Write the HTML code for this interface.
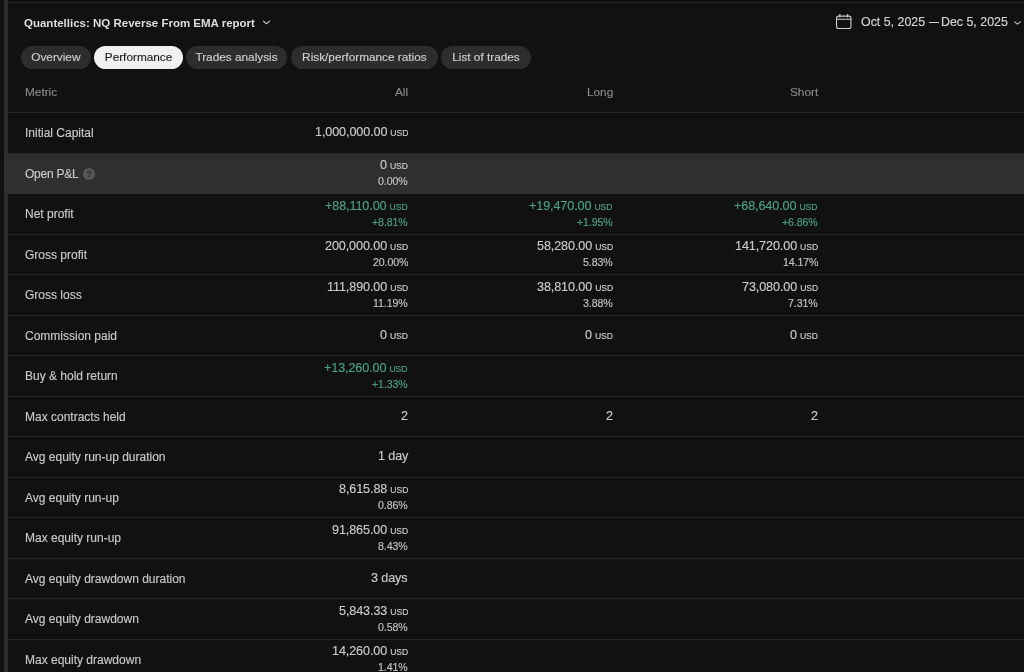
<!DOCTYPE html><html><head><meta charset="utf-8"><style>
*{margin:0;padding:0;box-sizing:border-box}
html,body{width:1024px;height:672px;overflow:hidden;background:#111111;font-family:"Liberation Sans",sans-serif;color:#d8d8d8}
.abs{position:absolute}
body>div{will-change:transform}
.lbl,.v1,.v2,.pill,.date,.hdr{-webkit-text-stroke:0.15px currentColor}
.lstrip{position:absolute;left:4px;top:0;width:4px;height:672px;background:#2c2c2c}
.topline{position:absolute;left:8px;top:2px;width:1016px;height:1px;background:#252525}
.title{position:absolute;left:24px;top:15px;font-size:11.5px;font-weight:bold;color:#dedede;white-space:nowrap;line-height:16px}
.chev{position:absolute}
.date{position:absolute;top:14.2px;font-size:12.4px;color:#d4d4d4;white-space:nowrap;line-height:16px}
.pill{position:absolute;top:46px;height:23px;border-radius:11.5px;background:#2d2d2d;color:#cfcfcf;font-size:11.8px;line-height:23.4px;text-align:center;white-space:nowrap}
.pill.act{background:#f0f0f0;color:#1c1c1c}
.hdr{position:absolute;top:85px;font-size:11.8px;color:#8a8a8a;line-height:14px;white-space:nowrap}
.row{position:absolute;left:8px;width:1016px}
.row.hov{left:4px;width:1020px;background:#2f2f2f}
.bline{position:absolute;left:8px;width:1016px;height:1px;background:#262626}
.lbl{position:absolute;left:25px;font-size:12px;color:#c9c9c9;white-space:nowrap;line-height:14px}
.v1{position:absolute;font-size:12.6px;color:#cacaca;white-space:nowrap;line-height:14px;text-align:right;letter-spacing:-0.1px}
.v1 .u{font-size:8.6px;letter-spacing:0px;margin-left:3px}
.v2{position:absolute;font-size:10.6px;color:#c2c2c2;white-space:nowrap;line-height:12px;text-align:right;letter-spacing:-0.1px}
.g{color:#4ca083}
.q{position:absolute;left:83px;width:12px;height:12px;border-radius:6px;background:#565656;color:#2e2e2e;font-size:9px;font-weight:bold;line-height:12px;text-align:center}
</style></head><body>
<div class="lstrip"></div><div class="topline"></div>
<div class="title">Quantellics: NQ Reverse From EMA report</div>
<svg class="chev" style="left:262px;top:19px" width="9" height="6" viewBox="0 0 9 6"><path d="M1.4 2.1 L4.5 4.7 L7.6 2.1" fill="none" stroke="#c8c8c8" stroke-width="1.15" stroke-linecap="round" stroke-linejoin="round"/></svg>
<svg class="abs" style="left:835px;top:13px" width="18" height="18" viewBox="0 0 18 18"><rect x="1.55" y="3.15" width="14.4" height="12.3" rx="2" fill="none" stroke="#cdcdcd" stroke-width="1.1"/><path d="M1.5 6.2 H16.5 M4.8 0.9 V4.5 M12.6 0.9 V4.5" stroke="#cdcdcd" stroke-width="1.1" fill="none"/></svg>
<div class="date" style="left:861px">Oct 5, 2025</div><div class="abs" style="left:929px;top:22px;width:9.6px;height:1px;background:#cfcfcf"></div><div class="date" style="left:auto;right:16px">Dec 5, 2025</div>
<svg class="chev" style="left:1013px;top:19.5px" width="9" height="6" viewBox="0 0 9 6"><path d="M1.7 1.8 L4.5 4.1 L7.3 1.8" fill="none" stroke="#c8c8c8" stroke-width="1.1" stroke-linecap="round" stroke-linejoin="round"/></svg>
<div class="pill" style="left:21.2px;width:69.7px">Overview</div>
<div class="pill act" style="left:93.7px;width:89.1px">Performance</div>
<div class="pill" style="left:186.2px;width:101.0px">Trades analysis</div>
<div class="pill" style="left:291.1px;width:146.8px">Risk/performance ratios</div>
<div class="pill" style="left:441.4px;width:90.0px">List of trades</div>
<div class="hdr" style="left:25px">Metric</div>
<div class="hdr" style="right:616px">All</div>
<div class="hdr" style="right:411px">Long</div>
<div class="hdr" style="right:206px">Short</div>
<div class="bline" style="top:112.00px"></div>
<div class="bline" style="top:152.53px"></div>
<div class="bline" style="top:193.06px"></div>
<div class="bline" style="top:233.59px"></div>
<div class="bline" style="top:274.12px"></div>
<div class="bline" style="top:314.65px"></div>
<div class="bline" style="top:355.18px"></div>
<div class="bline" style="top:395.71px"></div>
<div class="bline" style="top:436.24px"></div>
<div class="bline" style="top:476.77px"></div>
<div class="bline" style="top:517.30px"></div>
<div class="bline" style="top:557.83px"></div>
<div class="bline" style="top:598.36px"></div>
<div class="bline" style="top:638.89px"></div>
<div class="lbl" style="top:126.10px">Initial Capital</div>
<div class="v1" style="right:616px;top:125.00px">1,000,000.00<span class="u">USD</span></div>
<div class="row hov" style="top:153.53px;height:39.53px"></div>
<div class="lbl" style="top:166.63px;letter-spacing:-0.25px">Open P&amp;L</div>
<div class="q" style="top:167.63px">?</div>
<div class="v1" style="right:616px;top:158.03px">0<span class="u">USD</span></div>
<div class="v2" style="right:616px;top:175.03px">0.00%</div>
<div class="lbl" style="top:207.16px">Net profit</div>
<div class="v1 g" style="right:616px;top:198.56px">+88,110.00<span class="u">USD</span></div>
<div class="v2 g" style="right:616px;top:215.56px">+8.81%</div>
<div class="v1 g" style="right:411px;top:198.56px">+19,470.00<span class="u">USD</span></div>
<div class="v2 g" style="right:411px;top:215.56px">+1.95%</div>
<div class="v1 g" style="right:206px;top:198.56px">+68,640.00<span class="u">USD</span></div>
<div class="v2 g" style="right:206px;top:215.56px">+6.86%</div>
<div class="lbl" style="top:247.69px">Gross profit</div>
<div class="v1" style="right:616px;top:239.09px">200,000.00<span class="u">USD</span></div>
<div class="v2" style="right:616px;top:256.09px">20.00%</div>
<div class="v1" style="right:411px;top:239.09px">58,280.00<span class="u">USD</span></div>
<div class="v2" style="right:411px;top:256.09px">5.83%</div>
<div class="v1" style="right:206px;top:239.09px">141,720.00<span class="u">USD</span></div>
<div class="v2" style="right:206px;top:256.09px">14.17%</div>
<div class="lbl" style="top:288.22px">Gross loss</div>
<div class="v1" style="right:616px;top:279.62px">111,890.00<span class="u">USD</span></div>
<div class="v2" style="right:616px;top:296.62px">11.19%</div>
<div class="v1" style="right:411px;top:279.62px">38,810.00<span class="u">USD</span></div>
<div class="v2" style="right:411px;top:296.62px">3.88%</div>
<div class="v1" style="right:206px;top:279.62px">73,080.00<span class="u">USD</span></div>
<div class="v2" style="right:206px;top:296.62px">7.31%</div>
<div class="lbl" style="top:328.75px">Commission paid</div>
<div class="v1" style="right:616px;top:327.65px">0<span class="u">USD</span></div>
<div class="v1" style="right:411px;top:327.65px">0<span class="u">USD</span></div>
<div class="v1" style="right:206px;top:327.65px">0<span class="u">USD</span></div>
<div class="lbl" style="top:369.28px">Buy &amp; hold return</div>
<div class="v1 g" style="right:616px;top:360.68px">+13,260.00<span class="u">USD</span></div>
<div class="v2 g" style="right:616px;top:377.68px">+1.33%</div>
<div class="lbl" style="top:409.81px">Max contracts held</div>
<div class="v1" style="right:616px;top:408.71px">2</div>
<div class="v1" style="right:411px;top:408.71px">2</div>
<div class="v1" style="right:206px;top:408.71px">2</div>
<div class="lbl" style="top:450.34px">Avg equity run-up duration</div>
<div class="v1" style="right:616px;top:449.24px">1 day</div>
<div class="lbl" style="top:490.87px">Avg equity run-up</div>
<div class="v1" style="right:616px;top:482.27px">8,615.88<span class="u">USD</span></div>
<div class="v2" style="right:616px;top:499.27px">0.86%</div>
<div class="lbl" style="top:531.40px">Max equity run-up</div>
<div class="v1" style="right:616px;top:522.80px">91,865.00<span class="u">USD</span></div>
<div class="v2" style="right:616px;top:539.80px">8.43%</div>
<div class="lbl" style="top:571.93px">Avg equity drawdown duration</div>
<div class="v1" style="right:616px;top:570.83px">3 days</div>
<div class="lbl" style="top:612.46px">Avg equity drawdown</div>
<div class="v1" style="right:616px;top:603.86px">5,843.33<span class="u">USD</span></div>
<div class="v2" style="right:616px;top:620.86px">0.58%</div>
<div class="lbl" style="top:652.99px">Max equity drawdown</div>
<div class="v1" style="right:616px;top:644.39px">14,260.00<span class="u">USD</span></div>
<div class="v2" style="right:616px;top:661.39px">1.41%</div>
</body></html>
